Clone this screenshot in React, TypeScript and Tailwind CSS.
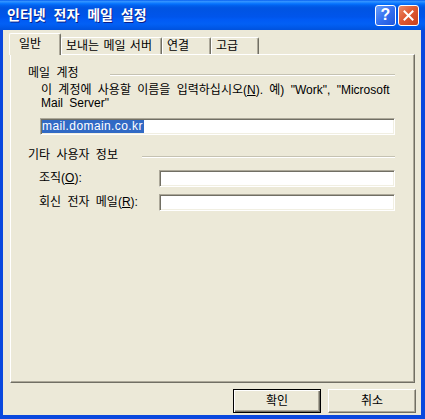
import React from 'react';

const TABS = [
  { label: '보내는 메일 서버', w: 'w-[101px]' },
  { label: '연결', w: 'w-[49px]' },
  { label: '고급', w: 'w-[48px]' },
];

export default function App() {
  return (
    <div className="w-[425px] h-[419px] flex flex-col bg-[#0a48de] font-['Liberation_Sans','Noto_Sans_CJK_KR',sans-serif] text-[12px] text-black [word-spacing:3px]">
      {/* Title bar */}
      <div className="h-[30px] shrink-0 flex items-center pl-[7px] pr-[6px] bg-[linear-gradient(to_bottom,#0058ee_0%,#3593ff_4%,#288eff_7%,#127dff_10%,#036ffc_14%,#0262ee_18%,#0057e5_24%,#0054e3_30%,#0055eb_56%,#005bf5_66%,#0260f5_80%,#0058e8_92%,#0052dc_100%)]">
        <span className="text-white text-[14px] font-bold leading-[16px] [word-spacing:4px] [text-shadow:1px_1px_0_#0a1f8a]">
          인터넷 전자 메일 설정
        </span>
        <div className="ml-auto flex gap-[2px]">
          <div className="w-[21px] h-[21px] rounded-[3px] border border-white bg-[linear-gradient(135deg,#6a9ef9_0%,#3470f0_50%,#1f56dc_100%)] flex items-center justify-center">
            <span className="text-white font-bold text-[16px] leading-none">?</span>
          </div>
          <div className="w-[21px] h-[21px] rounded-[3px] border border-white bg-[linear-gradient(135deg,#eb8a68_0%,#df5a34_45%,#c9401c_100%)] flex items-center justify-center">
            <svg width="11" height="11" viewBox="0 0 11 11">
              <path d="M1.5 1.5 L9.5 9.5 M9.5 1.5 L1.5 9.5" stroke="white" strokeWidth="2" strokeLinecap="square" />
            </svg>
          </div>
        </div>
      </div>

      {/* Dialog body */}
      <div className="flex-1 ml-[3px] mr-[4px] mb-[4px] bg-[#ece9d8] flex flex-col">
        {/* Tabs */}
        <div className="h-[24px] pt-[3px] pl-[6px] flex items-end [word-spacing:1px]">
          <div className="relative z-10 -mb-px w-[52px] h-[22px] pl-[9px] flex items-center bg-[#ece9d8] border-l border-t border-r border-l-white border-t-white border-r-[#716f64] rounded-t-[2px] shadow-[inset_-1px_0_0_#aca899]">
            <span className="leading-[15px]">일반</span>
          </div>
          {TABS.map((t) => (
            <div
              key={t.label}
              className={`${t.w} h-[17px] pl-[4px] flex items-center border-l border-t border-r border-l-white border-t-white border-r-[#716f64] rounded-t-[2px] shadow-[inset_-1px_0_0_#aca899]`}
            >
              <span className="leading-[15px] whitespace-nowrap">{t.label}</span>
            </div>
          ))}
        </div>

        {/* Tab panel */}
        <div className="ml-[7px] w-[405px] h-[329px] border border-t-white border-l-white border-r-[#716f64] border-b-[#716f64] shadow-[inset_-1px_-1px_0_#aca899] pl-[17px] flex flex-col">
          {/* Mail account */}
          <div className="mt-[11px] flex">
            <span className="w-[82px] leading-[15px]">메일 계정</span>
            <div className="w-[285px] h-[2px] mt-[8px] border-t border-b border-t-[#c5c2b2] border-b-white" />
          </div>
          <p className="ml-[13px] mt-[3px] leading-[13px] whitespace-nowrap [word-spacing:3px]">
            이 계정에 사용할 이름을 입력하십시오(<u>N</u>). 예) "Work", "Microsoft
            <br />
            Mail Server"
          </p>
          <div className="ml-[12px] mt-[8px] w-[355px] h-[17px] bg-white border border-t-[#aca899] border-l-[#aca899] border-r-white border-b-white shadow-[inset_1px_1px_0_#716f64,inset_-1px_-1px_0_#f1efe2] pl-[1px] flex items-center">
            <span className="bg-[#316ac5] text-white leading-[13px] tracking-[0.4px] pr-[1px]">mail.domain.co.kr</span>
          </div>

          {/* Other user info */}
          <div className="mt-[13px] flex">
            <span className="w-[114px] leading-[15px]">기타 사용자 정보</span>
            <div className="w-[253px] h-[2px] mt-[8px] border-t border-b border-t-[#c5c2b2] border-b-white" />
          </div>
          <div className="mt-[7px] h-[17px] flex items-center">
            <span className="ml-[11px] w-[120px] leading-[15px]">
              조직(<u>O</u>):
            </span>
            <div className="w-[236px] h-[17px] bg-white border border-t-[#aca899] border-l-[#aca899] border-r-white border-b-white shadow-[inset_1px_1px_0_#716f64,inset_-1px_-1px_0_#f1efe2]" />
          </div>
          <div className="mt-[7px] h-[17px] flex items-center">
            <span className="ml-[11px] w-[120px] leading-[15px]">
              회신 전자 메일(<u>R</u>):
            </span>
            <div className="w-[236px] h-[17px] bg-white border border-t-[#aca899] border-l-[#aca899] border-r-white border-b-white shadow-[inset_1px_1px_0_#716f64,inset_-1px_-1px_0_#f1efe2]" />
          </div>
        </div>

        {/* Buttons */}
        <div className="mt-[6px] pr-[5px] flex justify-end gap-[7px]">
          <button className="w-[88px] h-[24px] border border-black bg-[#ece9d8] shadow-[inset_1px_1px_0_#ffffff,inset_-1px_-1px_0_#716f64,inset_-2px_-2px_0_#aca899] flex items-center justify-center">
            <span className="leading-[15px]">확인</span>
          </button>
          <button className="w-[88px] h-[24px] border border-t-white border-l-white border-r-[#716f64] border-b-[#716f64] bg-[#ece9d8] shadow-[inset_-1px_-1px_0_#aca899] flex items-center justify-center">
            <span className="leading-[15px]">취소</span>
          </button>
        </div>
      </div>
    </div>
  );
}
